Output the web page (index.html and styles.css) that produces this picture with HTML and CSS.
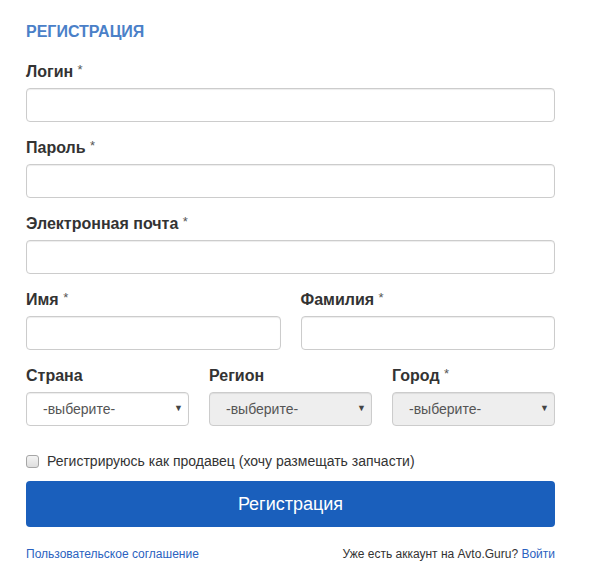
FILE: index.html
```html
<!DOCTYPE html>
<html lang="ru">
<head>
    <meta charset="UTF-8">
    <meta name="viewport" content="width=device-width, initial-scale=1.0">
    <title>Регистрация</title>
    <link rel="stylesheet" href="styles.css">
</head>
<body>
    <div class="container">
        <h1 class="title">Регистрация</h1>

        <form class="reg-form">
            <div class="group">
                <label for="login">Логин <span class="req">*</span></label>
                <input type="text" id="login">
            </div>
            <div class="group">
                <label for="pass">Пароль <span class="req">*</span></label>
                <input type="password" id="pass">
            </div>
            <div class="group">
                <label for="email">Электронная почта <span class="req">*</span></label>
                <input type="email" id="email">
            </div>

            <div class="row row-2">
                <div class="group">
                    <label for="name">Имя <span class="req">*</span></label>
                    <input type="text" id="name">
                </div>
                <div class="group">
                    <label for="surname">Фамилия <span class="req">*</span></label>
                    <input type="text" id="surname">
                </div>
            </div>

            <!-- Location selects -->
            <div class="row row-3">
                <div class="group">
                    <label for="country">Страна</label>
                    <div class="select-wrap">
                        <select id="country">
                            <option>-выберите-</option>
                        </select>
                    </div>
                </div>
                <div class="group">
                    <label for="region">Регион</label>
                    <div class="select-wrap">
                        <select id="region" disabled>
                            <option>-выберите-</option>
                        </select>
                    </div>
                </div>
                <div class="group">
                    <label for="city">Город <span class="req">*</span></label>
                    <div class="select-wrap">
                        <select id="city" disabled>
                            <option>-выберите-</option>
                        </select>
                    </div>
                </div>
            </div>

            <label class="check">
                <input type="checkbox">
                <span>Регистрируюсь как продавец (хочу размещать запчасти)</span>
            </label>

            <button type="submit" class="submit-btn">Регистрация</button>
        </form>

        <div class="footer">
            <a href="#">Пользовательское соглашение</a>
            <span>Уже есть аккаунт на Avto.Guru? <a href="#">Войти</a></span>
        </div>
    </div>
</body>
</html>
```

FILE: styles.css
```css
body {
    margin: 0;
    font-family: "Liberation Sans", Arial, sans-serif;
    color: #333;
    background: #fff;
}
.container {
    width: 529px;
    padding: 22px 0 0 26px;
}
.title {
    margin: 0 0 20px;
    font-size: 16px;
    line-height: 20px;
    font-weight: bold;
    text-transform: uppercase;
    color: #4a80c8;
}
.group {
    margin-bottom: 16px;
}
.group label {
    display: block;
    margin-bottom: 6px;
    font-size: 16px;
    line-height: 20px;
    font-weight: bold;
    color: #333;
}
.req {
    font-weight: normal;
    font-size: 13px;
    vertical-align: top;
    line-height: 16px;
    color: #555;
}
.group input {
    display: block;
    box-sizing: border-box;
    width: 100%;
    height: 34px;
    padding: 6px 12px;
    border: 1px solid #ccc;
    border-radius: 4px;
    box-shadow: inset 0 1px 1px rgba(0, 0, 0, 0.075);
    font-family: inherit;
    font-size: 14px;
}
.row {
    display: grid;
    column-gap: 20px;
}
.row-2 {
    grid-template-columns: 1fr 1fr;
}
.row-3 {
    grid-template-columns: 1fr 1fr 1fr;
    margin-bottom: 9px;
}
.select-wrap {
    position: relative;
}
.select-wrap::after {
    content: "\25BC";
    position: absolute;
    right: 6px;
    top: 11px;
    font-size: 9px;
    color: #444;
    pointer-events: none;
}
.select-wrap select {
    display: block;
    box-sizing: border-box;
    width: 100%;
    height: 34px;
    padding: 0 20px 0 16px;
    border: 1px solid #ccc;
    border-radius: 4px;
    background: #fff;
    color: #555;
    font-family: inherit;
    font-size: 14px;
    -webkit-appearance: none;
    appearance: none;
    box-shadow: inset 0 1px 1px rgba(0, 0, 0, 0.075);
}
.select-wrap select:disabled {
    background: #eee;
    opacity: 1;
}
.check {
    display: flex;
    align-items: center;
    height: 20px;
    font-size: 14px;
    color: #333;
}
.check input {
    -webkit-appearance: none;
    appearance: none;
    box-sizing: border-box;
    width: 13px;
    height: 13px;
    margin: 0 8px 0 0;
    border: 1px solid #a6a6a6;
    border-radius: 3px;
    background: linear-gradient(#f4f4f4, #dedede);
}
.submit-btn {
    display: block;
    width: 100%;
    height: 46px;
    margin-top: 10px;
    border: none;
    border-radius: 4px;
    background: #1a5fbc;
    color: #fff;
    font-family: inherit;
    font-size: 18px;
    cursor: pointer;
}
.submit-btn:hover {
    background: #174f9e;
}
.footer {
    display: flex;
    justify-content: space-between;
    margin-top: 19px;
    font-size: 12px;
    line-height: 16px;
    color: #333;
}
.footer a {
    color: #2a62c0;
    text-decoration: none;
}
```
